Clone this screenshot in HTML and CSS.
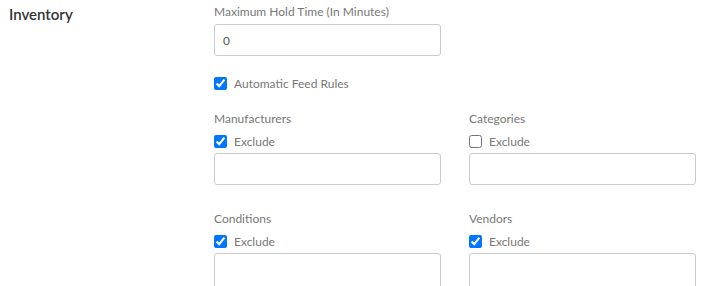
FILE: index.html
```html
<!DOCTYPE html>
<html lang="en">
<head>
  <meta charset="UTF-8" />
  <title>Inventory</title>
  <link rel="stylesheet" href="styles.css">
</head>
<body>
  <section class="settings-row">
    <h2 class="settings-title">Inventory</h2>

    <div class="settings-body">
      <div class="field">
        <label for="holdTime">Maximum Hold Time (In Minutes)</label>
        <input type="text" id="holdTime" class="text-input" value="0">
      </div>

      <label class="check check-main">
        <input type="checkbox" checked>
        Automatic Feed Rules
      </label>

      <div class="rule-grid">
        <div class="rule">
          <div class="rule-label">Manufacturers</div>
          <label class="check"><input type="checkbox" checked> Exclude</label>
          <input type="text" class="text-input">
        </div>
        <div class="rule">
          <div class="rule-label">Categories</div>
          <label class="check"><input type="checkbox"> Exclude</label>
          <input type="text" class="text-input">
        </div>
        <div class="rule">
          <div class="rule-label">Conditions</div>
          <label class="check"><input type="checkbox" checked> Exclude</label>
          <input type="text" class="text-input tall">
        </div>
        <div class="rule">
          <div class="rule-label">Vendors</div>
          <label class="check"><input type="checkbox" checked> Exclude</label>
          <input type="text" class="text-input tall">
        </div>
      </div>
    </div>
  </section>
</body>
</html>
```

FILE: styles.css
```css
* {
  box-sizing: border-box;
  font-family: "Lato", "Liberation Sans", sans-serif;
}
body {
  margin: 0;
  background: #fff;
  color: #777;
  font-size: 12px;
}
.settings-row {
  display: flex;
  padding: 4px 0 0 9px;
}
.settings-title {
  width: 205px;
  margin: 0;
  font-size: 15px;
  font-weight: 600;
  line-height: 20px;
  color: #333;
}
.settings-body {
  width: 483px;
}
.field label {
  display: block;
  line-height: 16px;
  margin-bottom: 4px;
}
.text-input {
  display: block;
  width: 227px;
  height: 32px;
  padding: 0 8px;
  border: 1px solid #ccc;
  border-radius: 3px;
  font-size: 12px;
  color: #555;
  background: #fff;
}
.check {
  display: flex;
  align-items: center;
  gap: 7px;
  line-height: 15px;
  margin-bottom: 4px;
}
.check input {
  margin: 0;
  width: 13px;
  height: 13px;
}
.check-main {
  margin-top: 20px;
}
.rule-grid {
  display: grid;
  grid-template-columns: 227px 227px;
  column-gap: 28px;
  row-gap: 26px;
  margin-top: 20px;
}
.rule-label {
  line-height: 16px;
  margin-bottom: 7px;
}
.text-input.tall {
  height: 60px;
}
```
